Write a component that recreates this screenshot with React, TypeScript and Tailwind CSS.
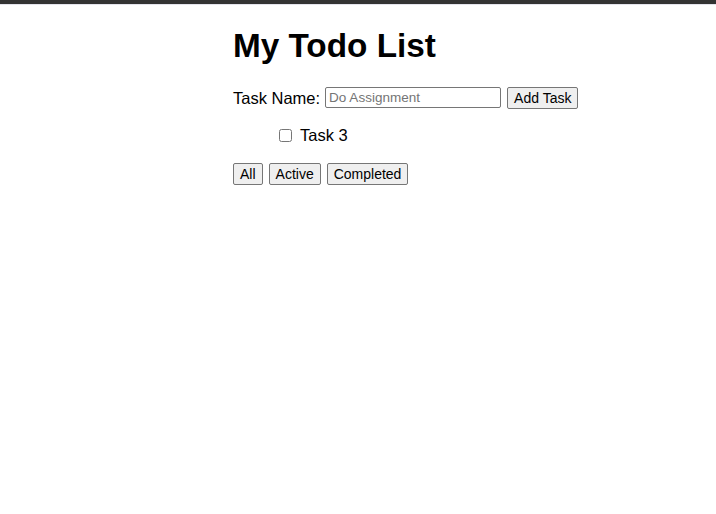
import { useState } from "react";

type Filter = "All" | "Active" | "Completed";

type Task = {
    id: number;
    name: string;
    done: boolean;
};

export default function App() {
    const [tasks, setTasks] = useState<Task[]>([{ id: 3, name: "Task 3", done: false }]);
    const [name, setName] = useState("");
    const [filter, setFilter] = useState<Filter>("All");

    const addTask = () => {
        if (!name.trim()) return;
        setTasks((prev) => [...prev, { id: Date.now(), name: name.trim(), done: false }]);
        setName("");
    };

    const toggle = (id: number) => {
        setTasks((prev) => prev.map((t) => (t.id === id ? { ...t, done: !t.done } : t)));
    };

    const visible = tasks.filter((t) =>
        filter === "All" ? true : filter === "Active" ? !t.done : t.done
    );

    const btn =
        "h-[22px] px-[6px] bg-[#efefef] border border-[#767676] rounded-[2px] text-[14px] leading-[16px] text-black";

    return (
        <div className="min-h-[514px] bg-white text-black font-['Liberation_Sans',Arial,sans-serif]">
            <div className="h-[4px] bg-[#333333]" />
            <div className="h-[1px] bg-[#e4e4ec]" />
            <div className="pl-[233px] pt-[22px]">
                <h1 className="text-[33.3px] leading-[38px] font-bold">My Todo List</h1>

                <div className="mt-[22px] flex items-center h-[21px]">
                    <label className="text-[16.5px] leading-[18px] mr-[5px]">Task Name:</label>
                    <input
                        value={name}
                        onChange={(e) => setName(e.target.value)}
                        placeholder="Do Assignment"
                        className="w-[176px] h-[21px] px-[3px] border border-[#767676] rounded-[2px] text-[13.5px] placeholder:text-[#757575] outline-none"
                    />
                    <button onClick={addTask} className={`${btn} ml-[6px] h-[21px]`}>
                        Add Task
                    </button>
                </div>

                <ul className="mt-[18px] pl-[46px]">
                    {visible.map((t) => (
                        <li key={t.id} className="flex items-center h-[18px]">
                            <input
                                type="checkbox"
                                checked={t.done}
                                onChange={() => toggle(t.id)}
                                className="w-[13px] h-[13px] m-0"
                            />
                            <span className="ml-[8px] text-[16.5px] leading-[18px]">{t.name}</span>
                        </li>
                    ))}
                </ul>

                <div className="mt-[19px] flex gap-[6px]">
                    {(["All", "Active", "Completed"] as Filter[]).map((f) => (
                        <button key={f} onClick={() => setFilter(f)} className={btn}>
                            {f}
                        </button>
                    ))}
                </div>
            </div>
        </div>
    );
}
